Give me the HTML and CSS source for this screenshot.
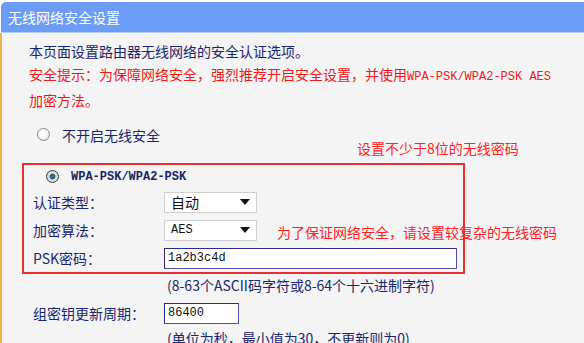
FILE: index.html
```html
<!DOCTYPE html>
<html lang="zh-CN">
<head>
    <meta charset="UTF-8">
    <title>无线网络安全设置</title>
    <link rel="stylesheet" href="styles.css">
</head>
<body>
    <div class="title-bar">无线网络安全设置</div>

    <div class="content">
        <p class="intro">本页面设置路由器无线网络的安全认证选项。</p>
        <p class="warning">安全提示：为保障网络安全，强烈推荐开启安全设置，并使用<span class="mono">WPA-PSK/WPA2-PSK AES</span><br>加密方法。</p>

        <label class="radio-row outer">
            <span class="radio"></span>
            <span>不开启无线安全</span>
        </label>

        <div class="psk-box">
            <label class="radio-row">
                <span class="radio checked"></span>
                <span class="mono bold">WPA-PSK/WPA2-PSK</span>
            </label>
            <div class="field-row">
                <span class="field-label">认证类型：</span>
                <div class="select">
                    <span>自动</span>
                    <svg width="10" height="6" viewBox="0 0 10 6"><path d="M0 0h10L5 6z" fill="#111"/></svg>
                </div>
            </div>
            <div class="field-row">
                <span class="field-label">加密算法：</span>
                <div class="select">
                    <span class="mono">AES</span>
                    <svg width="10" height="6" viewBox="0 0 10 6"><path d="M0 0h10L5 6z" fill="#111"/></svg>
                </div>
            </div>
            <div class="field-row">
                <span class="field-label">PSK密码：</span>
                <input type="text" class="text-input wide" value="1a2b3c4d">
            </div>
        </div>

        <p class="hint">(8-63个ASCII码字符或8-64个十六进制字符)</p>

        <div class="field-row outer">
            <span class="field-label">组密钥更新周期：</span>
            <input type="text" class="text-input short" value="86400">
        </div>
        <p class="hint">(单位为秒，最小值为30，不更新则为0)</p>

        <div class="note note-top">设置不少于8位的无线密码</div>
        <div class="note note-mid">为了保证网络安全，请设置较复杂的无线密码</div>
    </div>
</body>
</html>
```

FILE: styles.css
```css
* {
    margin: 0;
    padding: 0;
    box-sizing: border-box;
}

body {
    font-family: "Noto Sans CJK SC", "Liberation Sans", sans-serif;
    font-size: 14px;
    color: #1a2570;
    background: #fff;
    padding-top: 2px;
    overflow: hidden;
}

.mono {
    font-family: "Liberation Mono", "Noto Sans CJK SC", monospace;
    font-size: 12px;
}

.bold {
    font-weight: bold;
    color: #1a2466;
}

.title-bar {
    height: 31px;
    margin-left: 1px;
    padding-left: 7px;
    line-height: 30px;
    color: #fff;
    background: #6a9cf8;
    border-top-left-radius: 5px;
    border-bottom: 1px solid #b4ccfa;
}

.content {
    position: relative;
    background: #f4f4f4;
    border-left: 2px solid #f4b050;
    padding-top: 7px;
    height: 320px;
}

.intro,
.warning {
    padding-left: 27px;
    line-height: 23px;
}

.warning {
    color: #f01818;
}

.radio-row {
    display: flex;
    align-items: center;
    gap: 12px;
    height: 23px;
    padding-left: 13px;
}

.radio-row.outer {
    margin-top: 11px;
    padding-left: 35px;
}

.radio {
    width: 13px;
    height: 13px;
    border-radius: 50%;
    border: 1px solid #8a8a8a;
    background: radial-gradient(circle at 40% 35%, #fff 30%, #d8d8d8 100%);
}

.radio.checked {
    border-color: #3c3c3c;
    background: radial-gradient(circle, #1e7a9a 0, #2a5f80 30%, #e6e6e6 45%, #bcbcbc 100%);
}

.psk-box {
    width: 443px;
    margin: 17px 0 0 20px;
    border: 2px solid #e83030;
    padding-left: 9px;
}

.field-row {
    display: flex;
    align-items: center;
    height: 28px;
}

.field-row.outer {
    padding-left: 31px;
    margin-top: 2px;
}

.field-label {
    width: 131px;
    flex-shrink: 0;
}

.select {
    width: 93px;
    height: 21px;
    display: flex;
    align-items: center;
    justify-content: space-between;
    padding: 0 6px;
    background: #fff;
    border: 1px solid #cfcfcf;
    color: #111;
}

.text-input {
    height: 21px;
    padding: 0 3px;
    border: 1px solid #2c2c8c;
    border-right-color: #5050a8;
    border-bottom-color: #5050a8;
    background: #fff;
    font-family: "Liberation Mono", monospace;
    font-size: 12px;
    color: #111;
    outline: none;
}

.text-input.wide {
    width: 293px;
}

.text-input.short {
    width: 75px;
}

.hint {
    padding-left: 165px;
    line-height: 23px;
}

.note {
    position: absolute;
    color: #f22;
    line-height: 20px;
    white-space: nowrap;
}

.note-top {
    left: 355px;
    top: 105px;
}

.note-mid {
    left: 275px;
    top: 189px;
}
```
